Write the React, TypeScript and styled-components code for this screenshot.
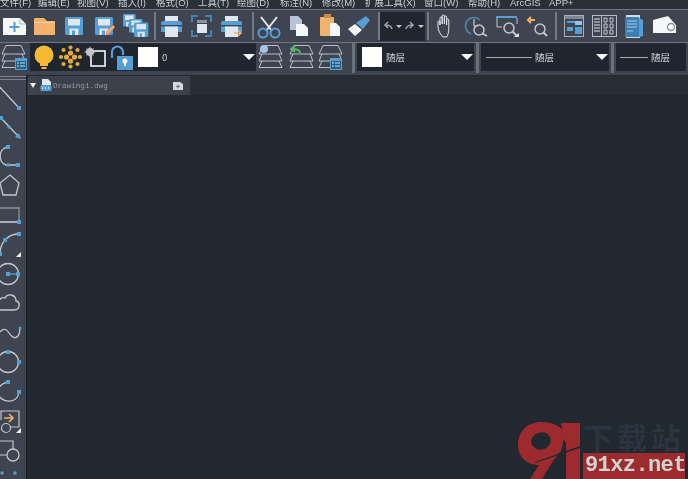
import React from 'react';
import styled, { createGlobalStyle } from 'styled-components';

const BLUE = '#559fd4';
const LIGHT = '#e1e7f2';
const WHITE = '#f6f7f9';
const ORANGE = '#f2b26e';
const YELLOW = '#f7b933';
const LINE = '#c3c8ce';

const GlobalStyle = createGlobalStyle`
  html, body {
    margin: 0;
    padding: 0;
    background: #212830;
  }
`;

// Icons are written in page-like coordinates, the viewBox picks the slot
//----------------------------------------------
type IcProps = {
  x: number;
  w: number;
  y?: number;
  h?: number;
  children?: React.ReactNode;
};

const IcSvg = styled.svg`
  display: block;
  flex-shrink: 0;
`;

const Ic: React.FC<IcProps> = ({ x, w, y = 10, h = 32, children }) => (
  <IcSvg width={w} height={h} viewBox={`${x} ${y} ${w} ${h}`}>
    {children}
  </IcSvg>
);

const Floppy: React.FC<{ x: number; y: number; s?: number }> = ({ x, y, s = 1 }) => (
  <g transform={`translate(${x} ${y}) scale(${s})`}>
    <rect width="18" height="18" rx="1.5" fill={BLUE} />
    <rect x="3" y="2" width="12" height="6.5" fill={LIGHT} />
    <rect x="4.5" y="11.5" width="9" height="6.5" fill={LIGHT} />
    <rect x="7" y="13.5" width="3" height="4.5" fill={BLUE} />
  </g>
);

const Printer: React.FC<{ x: number }> = ({ x }) => (
  <g transform={`translate(${x} 0)`}>
    <rect x="4" y="16" width="13" height="5" fill={LIGHT} />
    <path d="M2 21h17a2 2 0 0 1 2 2v9H0v-9a2 2 0 0 1 2-2z" fill={BLUE} />
    <rect x="0" y="25" width="21" height="1.500" fill="#3e4550" />
    <rect x="4" y="26.500" width="13" height="10.500" fill={LIGHT} />
  </g>
);

const Lens: React.FC<{ cx: number; cy: number; r?: number; ex: number; ey: number }> = ({
  cx,
  cy,
  r = 5,
  ex,
  ey,
}) => (
  <g fill="none" stroke={LINE}>
    <circle cx={cx} cy={cy} r={r} strokeWidth="1.5" />
    <path d={`M${cx + r * 0.7} ${cy + r * 0.7}L${ex} ${ey}`} strokeWidth="2" />
  </g>
);

const LayerStack: React.FC<{ x: number; y: number }> = ({ x, y }) => (
  <g transform={`translate(${x} ${y})`} fill="none" stroke="#c8ccd2" strokeWidth="0.9">
    <path d="M4 0.500h15L23 9H0z" />
    <path d="M3 9L0 16h23l-3-7" />
    <path d="M3 16L0 22.500h23l-3-6.500" />
  </g>
);

const FormBadge: React.FC<{ x: number; y: number }> = ({ x, y }) => (
  <g transform={`translate(${x} ${y})`}>
    <rect width="12" height="12" fill={BLUE} />
    <rect x="1" y="3" width="10" height="8" fill="#2a5f86" />
    <path d="M2 5h2M2 8h2M5 5h5M5 8h5" stroke="#bcdcf2" strokeWidth="1" />
  </g>
);

const Square: React.FC<{ x: number; y: number; s?: number }> = ({ x, y, s = 4 }) => (
  <rect x={x - s / 2} y={y - s / 2} width={s} height={s} fill={BLUE} />
);

// Page parts
//----------------------------------------------
const Page = styled.div`
  position: relative;
  width: 688px;
  height: 479px;
  overflow: hidden;
  background: #212830;
  display: flex;
  flex-direction: column;
  filter: blur(0.35px);
`;

const MenuBar = styled.div`
  height: 9px;
  background: #2b3038;
  display: flex;
  align-items: flex-end;
  overflow: hidden;
  flex-shrink: 0;
`;

const MenuItem = styled.div<{ $w: number }>`
  width: ${(p) => p.$w}px;
  flex-shrink: 0;
  font: 9.5px/12px 'Liberation Sans', 'Noto Sans CJK SC', sans-serif;
  color: #c9ced4;
  white-space: nowrap;
`;

const ToolBar = styled.div`
  height: 32px;
  flex-shrink: 0;
  background: #3e4550;
  border-top: 1px solid #6d747d;
  display: flex;
  align-items: flex-start;
`;

const Sep = styled.div<{ $w: number; $ml: number }>`
  flex-shrink: 0;
  width: ${(p) => p.$w}px;
  height: 28px;
  margin: 2px 0 0 ${(p) => p.$ml}px;
  background: #737a83;
`;

const UndoBlock = styled.div`
  width: 45px;
  height: 29px;
  margin: 2px 0 0 0;
  background: #20262f;
  flex-shrink: 0;
`;

const LayerBar = styled.div`
  height: 32px;
  flex-shrink: 0;
  background: #3e4550;
  border-top: 1px solid #707781;
  display: flex;
  align-items: flex-start;
`;

const DarkBlock = styled.div<{ $w: number }>`
  width: ${(p) => p.$w}px;
  height: 28px;
  margin-top: 0;
  background: #1f2630;
  flex-shrink: 0;
  display: flex;
  align-items: center;
`;

const Swatch = styled.div<{ $ml: number }>`
  width: 20px;
  height: 20px;
  margin-left: ${(p) => p.$ml}px;
  background: #ffffff;
  flex-shrink: 0;
`;

const LineSample = styled.div<{ $ml: number; $w: number }>`
  width: ${(p) => p.$w}px;
  height: 1px;
  margin-left: ${(p) => p.$ml}px;
  background: #a9aeb4;
  flex-shrink: 0;
`;

const BlockLabel = styled.span<{ $ml: number }>`
  margin-left: ${(p) => p.$ml}px;
  font: 9.5px/12px 'Noto Sans CJK SC', 'Liberation Sans', sans-serif;
  color: #d5d9de;
  white-space: nowrap;
`;

const Caret = styled.div`
  margin-left: auto;
  margin-right: 1px;
  width: 0;
  height: 0;
  border-left: 6px solid transparent;
  border-right: 6px solid transparent;
  border-top: 6px solid #f4f5f6;
  flex-shrink: 0;
`;

const Divider = styled.div`
  width: 3px;
  height: 30px;
  margin: 0 2px;
  background: #68707a;
  flex-shrink: 0;
`;

const Body = styled.div`
  flex: 1;
  display: flex;
  min-height: 0;
`;

const SideBar = styled.div`
  width: 26px;
  background: #3e4550;
  border-right: 1px solid #1a1f26;
  flex-shrink: 0;
  display: flex;
  flex-direction: column;
`;

const Grip = styled.div`
  height: 2px;
  margin: 1px 0 2px;
  border-top: 1px solid #7c838c;
  border-bottom: 1px solid #7c838c;
`;

const Canvas = styled.div`
  flex: 1;
  background: #212830;
`;

const TabStrip = styled.div`
  height: 19px;
  margin-top: 1px;
  display: flex;
  align-items: stretch;
  background: #282e36;
`;

const TabMenu = styled.div`
  width: 9px;
  margin-left: 1px;
  background: #3d444e;
  display: flex;
  align-items: center;
  justify-content: center;
  &::before {
    content: '';
    border-left: 3.5px solid transparent;
    border-right: 3.5px solid transparent;
    border-top: 5px solid #f0f2f4;
  }
`;

const Tab = styled.div`
  width: 131px;
  background: #3a414b;
  display: flex;
  align-items: center;
  padding-left: 3px;
  box-sizing: border-box;
`;

const TabLabel = styled.span`
  margin-left: 1px;
  font: 7.6px/12px 'Liberation Mono', monospace;
  color: #929ba5;
`;

const NewTab = styled.div`
  width: 22px;
  background: #3a414b;
  display: flex;
  align-items: center;
  justify-content: center;
`;

// Watermark lies over the canvas
//----------------------------------------------
const Watermark = styled.div`
  position: absolute;
  left: 518px;
  top: 420px;
  width: 170px;
  height: 59px;
  display: flex;
`;

const MarkText = styled.div`
  margin-left: 3px;
  width: 102px;
  display: flex;
  flex-direction: column;
`;

const MarkTitle = styled.div`
  height: 33px;
  font: 700 30px/33px 'Noto Sans CJK SC', sans-serif;
  color: #2a3540;
  white-space: nowrap;
  letter-spacing: 4px;
`;

const MarkUrl = styled.div`
  height: 26px;
  background: #9d2a2e;
  color: #d3d3d0;
  font: 700 22px/26px 'Liberation Mono', monospace;
  padding-left: 2px;
  letter-spacing: -0.6px;
  white-space: nowrap;
`;

const MENU: Array<[string, number]> = [
  ['文件(F)', 38],
  ['编辑(E)', 39],
  ['视图(V)', 41],
  ['插入(I)', 38],
  ['格式(O)', 42],
  ['工具(T)', 39],
  ['绘图(D)', 43],
  ['标注(N)', 42],
  ['修改(M)', 43],
  ['扩展工具(X)', 59],
  ['窗口(W)', 44],
  ['帮助(H)', 42],
  ['ArcGIS', 39],
  ['APP+', 40],
];

const MainTools: React.FC = () => (
  <ToolBar>
    <Ic x={0} w={30}>
      <path d="M3 18h17l6 6v11H3z" fill={WHITE} />
      <path d="M20 18v6h6" fill="none" stroke="#9aa3ad" strokeWidth="0.8" />
      <path d="M14.5 22v10M9.5 27h10" stroke={BLUE} strokeWidth="2" />
    </Ic>
    <Ic x={30} w={30}>
      <path d="M34 19a1 1 0 0 1 1-1h9l3 3h8v14H34z" fill={ORANGE} />
      <rect x="34" y="22" width="21" height="1" fill="#f8d3a5" />
    </Ic>
    <Ic x={60} w={30}>
      <Floppy x={65} y={17} />
    </Ic>
    <Ic x={90} w={29}>
      <Floppy x={95} y={17} />
      <path d="M113 25l2 2-6 7-3 1 .5-3z" fill={ORANGE} stroke="#d65b4a" strokeWidth="0.6" />
    </Ic>
    <Ic x={119} w={31}>
      <Floppy x={123} y={14} s={0.7} />
      <Floppy x={129} y={19} s={0.75} />
      <Floppy x={134} y={22.5} s={0.8} />
    </Ic>
    <Sep $w={2} $ml={4} />
    <Ic x={156} w={30}>
      <Printer x={161} />
    </Ic>
    <Ic x={186} w={30}>
      <path d="M192 22v-6h6M205 16h6v6M211 30v6h-6M198 36h-6v-6" fill="none" stroke="#4b82ad" strokeWidth="2" />
      <rect x="197" y="20" width="10" height="3" fill="#8b95a1" />
      <rect x="197" y="24" width="10" height="9" fill={LIGHT} />
    </Ic>
    <Ic x={216} w={35}>
      <Printer x={221} />
      <path d="M234 33h7M238 30l3 3-3 3" fill="none" stroke={ORANGE} strokeWidth="1.5" />
    </Ic>
    <Sep $w={2} $ml={1} />
    <Ic x={254} w={31}>
      <path d="M261 17l11 14M277 17l-11 14" stroke={LIGHT} strokeWidth="2" />
      <circle cx="263" cy="33" r="4.5" fill="none" stroke={BLUE} strokeWidth="2" />
      <circle cx="275" cy="33" r="4.5" fill="none" stroke={BLUE} strokeWidth="2" />
    </Ic>
    <Ic x={285} w={29}>
      <path d="M290 16h8l4 4v10h-12z" fill="#b5c4d6" />
      <path d="M296 24h8l4 4v8h-12z" fill={WHITE} />
    </Ic>
    <Ic x={314} w={30}>
      <rect x="320" y="17" width="14" height="19" rx="1" fill={ORANGE} />
      <rect x="324" y="14" width="7" height="4" fill="#c98a4a" />
      <path d="M330 23h6l4 4v9h-10z" fill={WHITE} />
    </Ic>
    <Ic x={344} w={34}>
      <path d="M348 29l7-5 7 6-7 6z" fill={WHITE} />
      <path d="M356 23l10-7 4 4-7 9z" fill={BLUE} />
    </Ic>
    <Sep $w={2} $ml={0} />
    <UndoBlock>
      <Ic x={382} w={45} y={12} h={29}>
        <path d="M394 29c-.5-3-3-4-7-4M390 22l-3 3 3 3" fill="none" stroke="#9aa1a9" strokeWidth="1.6" />
        <path d="M398 25h6l-3 3z" fill={LINE} />
        <path d="M408 29c.5-3 3-4 7-4M412 22l3 3-3 3" fill="none" stroke="#9aa1a9" strokeWidth="1.6" />
        <path d="M420 25h6l-3 3z" fill={LINE} />
      </Ic>
    </UndoBlock>
    <Sep $w={2} $ml={2} />
    <Ic x={431} w={31}>
      <path
        d="M445 37c-2-2-5-6-5-10v-5c0-1.500 2-1.500 2 0v3-7c0-1.500 2.200-1.500 2.200 0v6-8c0-1.500 2.200-1.500 2.200 0v8-7c0-1.500 2.200-1.500 2.200 0v8-5c0-1.500 2.200-1.500 2.200 0v9c0 3-1 6-2 8z"
        fill="none"
        stroke={LIGHT}
        strokeWidth="1"
      />
    </Ic>
    <Ic x={462} w={32}>
      <path d="M482 20a8.500 8.500 0 1 0-9 14" fill="none" stroke="#4b87b3" strokeWidth="1.500" />
      <path d="M476 19v7h4" fill="none" stroke={LIGHT} strokeWidth="1" />
      <Lens cx={481} cy={30} ex={489} ey={36} />
    </Ic>
    <Ic x={494} w={31}>
      <path d="M498 17h21" stroke={BLUE} strokeWidth="2" />
      <path d="M499 18v9h5M519 18v6" fill="none" stroke={LINE} strokeWidth="1" />
      <Lens cx={511} cy={28} ex={519} ey={36} />
      <path d="M516 37h5v-4z" fill={LIGHT} />
    </Ic>
    <Ic x={525} w={31}>
      <path d="M537 20h-5M533 17l-3 3 3 3" fill="none" stroke={ORANGE} strokeWidth="2" />
      <Lens cx={542} cy={29} ex={549} ey={36} />
    </Ic>
    <Sep $w={2} $ml={1} />
    <Ic x={559} w={32}>
      <rect x="566.500" y="15.500" width="19" height="21" fill="none" stroke="#aab0b7" />
      <rect x="567" y="16" width="18" height="3" fill="#7d8791" />
      <rect x="569" y="21" width="8" height="2" fill={BLUE} />
      <rect x="577" y="21" width="7" height="4" fill="#8fc4e8" />
      <rect x="569" y="27" width="6" height="4" fill={BLUE} />
      <rect x="577" y="27" width="7" height="7" fill={BLUE} />
    </Ic>
    <Ic x={591} w={31}>
      <rect x="594.500" y="15.500" width="24" height="21" fill="none" stroke="#b6bbc1" />
      <path d="M603.500 16v20" stroke="#b6bbc1" />
      <path d="M596 19h6M596 22h6M596 25h6M596 28h6M596 31h6" stroke={LIGHT} />
      <path
        d="M606 18h3v4h-3zM612 18h3v4h-3zM606 24h3v4h-3zM612 24h3v4h-3zM606 30h3v4h-3zM612 30h3v4h-3z"
        fill="none"
        stroke={LINE}
      />
    </Ic>
    <Ic x={622} w={30}>
      <path d="M628 15h14v23h-14z" fill="#d7dde5" />
      <path d="M627 17h14v20h-14z" fill="#3a7fb2" />
      <path d="M641 18l4 2v16l-4 1z" fill={BLUE} />
      <path d="M629 21h10M629 24h10M629 27h10M629 31h6" stroke="#a8d0ec" />
    </Ic>
    <Ic x={652} w={30}>
      <path d="M655 20l15-4 8 9v8h-23z" fill={WHITE} />
      <circle cx="673" cy="27" r="3.500" fill="none" stroke="#8b929a" strokeWidth="1.400" />
    </Ic>
  </ToolBar>
);

const LayerTools: React.FC = () => (
  <LayerBar>
    <Ic x={0} w={30} y={44} h={28}>
      <LayerStack x={2} y={46} />
      <FormBadge x={15} y={59} />
    </Ic>
    <DarkBlock $w={226}>
      <Ic x={30} w={27} y={44} h={28}>
        <circle cx="44" cy="56" r="9.500" fill={YELLOW} />
        <path d="M40 63h8v4h-8zM41.500 68h5v2h-5z" fill={YELLOW} />
      </Ic>
      <Ic x={57} w={27} y={44} h={28}>
        <g fill="#e3ab3c">
          <circle cx="70.500" cy="54" r="2.600" />
          <circle cx="70.500" cy="62" r="2.600" />
          <circle cx="66.500" cy="58" r="2.600" />
          <circle cx="74.500" cy="58" r="2.600" />
          <circle cx="70.500" cy="48.500" r="2.100" />
          <circle cx="70.500" cy="67.500" r="2.100" />
          <circle cx="61" cy="58" r="2.100" />
          <circle cx="80" cy="58" r="2.100" />
          <circle cx="63.500" cy="51" r="2.100" />
          <circle cx="77.500" cy="51" r="2.100" />
          <circle cx="63.500" cy="65" r="2.100" />
          <circle cx="77.500" cy="65" r="2.100" />
        </g>
      </Ic>
      <Ic x={84} w={24} y={44} h={28}>
        <rect x="91" y="52" width="14" height="15" fill="none" stroke={WHITE} strokeWidth="1.6" />
        <circle cx="90" cy="53" r="4" fill="#c3c7cc" />
        <path d="M90 47.500v11M84.500 53h11M86.500 49.500l7 7M93.500 49.500l-7 7" stroke="#c3c7cc" strokeWidth="1" />
      </Ic>
      <Ic x={108} w={28} y={44} h={28}>
        <path d="M112 59v-6a5.500 5.500 0 0 1 11 0v3" fill="none" stroke={BLUE} strokeWidth="2.200" />
        <rect x="117" y="57" width="16" height="14" fill={BLUE} />
        <circle cx="125" cy="62" r="2.500" fill={WHITE} />
        <rect x="124" y="63" width="2" height="4" fill={WHITE} />
      </Ic>
      <Swatch $ml={2} />
      <BlockLabel $ml={4}>0</BlockLabel>
      <Caret />
    </DarkBlock>
    <Ic x={256} w={31} y={44} h={28}>
      <LayerStack x={259} y={46} />
      <circle cx="264" cy="50" r="4" fill="#a9c3e0" />
    </Ic>
    <Ic x={287} w={30} y={44} h={28}>
      <LayerStack x={290} y={46} />
      <path d="M300 54c0-3-3-4-8-4M295 47l-4 3 4 3" fill="none" stroke="#59b76a" strokeWidth="2" />
    </Ic>
    <Ic x={317} w={33} y={44} h={28}>
      <LayerStack x={319} y={46} />
      <FormBadge x={330} y={59} />
    </Ic>
    <Divider />
    <DarkBlock $w={117}>
      <Swatch $ml={5} />
      <BlockLabel $ml={4}>随层</BlockLabel>
      <Caret />
    </DarkBlock>
    <Divider />
    <DarkBlock $w={128}>
      <LineSample $ml={5} $w={46} />
      <BlockLabel $ml={3}>随层</BlockLabel>
      <Caret />
    </DarkBlock>
    <Divider />
    <DarkBlock $w={70}>
      <LineSample $ml={4} $w={28} />
      <BlockLabel $ml={3}>随层</BlockLabel>
    </DarkBlock>
  </LayerBar>
);

const SideTools: React.FC = () => (
  <SideBar>
    <Grip />
    <Ic x={0} w={26} y={82} h={30}>
      <path d="M-2 85L19 108" stroke={LINE} strokeWidth="1.300" />
      <Square x={19} y={108} />
    </Ic>
    <Ic x={0} w={26} y={112} h={30}>
      <path d="M1 118L19 137" stroke={LINE} strokeWidth="1.300" />
      <Square x={1} y={118} />
      <Square x={9} y={127} s={3} />
      <path d="M21 139l-6-2 4-4z" fill={BLUE} />
    </Ic>
    <Ic x={0} w={26} y={142} h={30}>
      <path d="M8 147c-10 1-10 16-2 18h12" fill="none" stroke={LINE} strokeWidth="1.300" />
      <Square x={8} y={147} />
      <Square x={8} y={165} s={3} />
      <Square x={18} y={165} />
    </Ic>
    <Ic x={0} w={26} y={172} h={30}>
      <path d="M10 175l9 8-3 12H3L0 183z" fill="none" stroke={LINE} strokeWidth="1.300" />
    </Ic>
    <Ic x={0} w={26} y={202} h={30}>
      <path d="M0 208h19v14H-1" fill="none" stroke="#8e959d" strokeWidth="1.300" />
      <path d="M0 222h17" stroke={LINE} strokeWidth="1.300" />
      <Square x={19} y={222} />
    </Ic>
    <Ic x={0} w={26} y={232} h={30}>
      <path d="M0 254c0-12 8-20 19-20" fill="none" stroke={LINE} strokeWidth="1.300" />
      <Square x={19} y={234} />
      <Square x={5} y={240} />
      <Square x={0} y={254} />
      <path d="M16 257h5v-5z" fill={WHITE} />
    </Ic>
    <Ic x={0} w={26} y={262} h={28}>
      <circle cx="8" cy="274" r="10.500" fill="none" stroke={LINE} strokeWidth="1.300" />
      <path d="M8 274h10" stroke={BLUE} strokeWidth="1.300" />
      <Square x={8} y={274} />
      <Square x={18} y={274} />
    </Ic>
    <Ic x={0} w={26} y={290} h={30}>
      <path
        d="M0 310h14c6 0 7-8 2-9 0-7-9-8-11-3-2-1-5 0-5 2"
        fill="none"
        stroke={LINE}
        strokeWidth="1.300"
      />
    </Ic>
    <Ic x={0} w={26} y={320} h={28}>
      <path d="M0 332c4-5 7-2 9 1s6 7 9 3 1-6 2-8" fill="none" stroke={LINE} strokeWidth="1.300" />
      <Square x={20} y={328} s={2.500} />
    </Ic>
    <Ic x={0} w={26} y={348} h={30}>
      <circle cx="8" cy="362" r="10.500" fill="none" stroke={LINE} strokeWidth="1.300" />
      <Square x={8} y={352} />
      <Square x={19} y={362} />
    </Ic>
    <Ic x={0} w={26} y={378} h={30}>
      <path d="M8 382c-6 1-10 5-10 11 1 9 19 13 21-1" fill="none" stroke={LINE} strokeWidth="1.300" />
      <Square x={8} y={382} />
      <Square x={19} y={392} />
    </Ic>
    <Ic x={0} w={26} y={408} h={30}>
      <path d="M1 420v-9h18v16h-9" fill="none" stroke={LINE} strokeWidth="1.200" />
      <path d="M4 418h8M9 414l4 4-4 4" fill="none" stroke={ORANGE} strokeWidth="1.600" />
      <circle cx="6" cy="428" r="4.500" fill="none" stroke={LINE} strokeWidth="1.200" />
      <path d="M16 433h5v-5z" fill={WHITE} />
    </Ic>
    <Ic x={0} w={26} y={438} h={30}>
      <path d="M0 441h13v8M0 455h7" fill="none" stroke={LINE} strokeWidth="1.200" />
      <circle cx="13" cy="455" r="6" fill="none" stroke={LINE} strokeWidth="1.300" />
    </Ic>
    <Ic x={0} w={26} y={468} h={11}>
      <Square x={2} y={473} s={3} />
      <Square x={15} y={473} s={3} />
    </Ic>
  </SideBar>
);

const App: React.FC = () => (
  <Page>
    <GlobalStyle />
    <MenuBar>
      {MENU.map(([label, w]) => (
        <MenuItem key={label} $w={w}>
          {label}
        </MenuItem>
      ))}
    </MenuBar>
    <MainTools />
    <LayerTools />
    <Body>
      <SideTools />
      <Canvas>
        <TabStrip>
          <TabMenu />
          <Tab>
            <Ic x={0} w={12} y={0} h={13}>
              <path d="M2 0h6l3 3v4H2z" fill={LIGHT} />
              <rect x="0.500" y="6" width="11" height="6" rx="1" fill={BLUE} />
              <path d="M2 9h1M5 9h1M8 9h1" stroke={WHITE} strokeWidth="1.500" />
            </Ic>
            <TabLabel>Drawing1.dwg</TabLabel>
          </Tab>
          <NewTab>
            <Ic x={0} w={12} y={0} h={10}>
              <path d="M0 1h7l3 2v6H0z" fill="#d5d9de" />
              <path d="M5 3.500v4M3 5.500h4" stroke="#6d7680" strokeWidth="1" />
            </Ic>
          </NewTab>
        </TabStrip>
      </Canvas>
    </Body>
    <Watermark>
      <Ic x={518} w={62} y={420} h={59}>
        <path
          d="M541 422c14 0 23 6 24 13l-4 16-8 10-11 18h-12l9-14c-13 0-21-9-21-20 0-14 10-23 23-23z"
          fill="#9d2a2e"
        />
        <ellipse cx="541" cy="441" rx="10" ry="8.500" fill="#212830" transform="rotate(-15 541 441)" />
        <path d="M561 423h19v56h-14v-36l-2-4z" fill="#9d2a2e" />
        <path d="M535 462l45-16v2l-45 15z" fill="#212830" />
      </Ic>
      <MarkText>
        <MarkTitle>下载站</MarkTitle>
        <MarkUrl>91xz.net</MarkUrl>
      </MarkText>
    </Watermark>
  </Page>
);

export default App;
